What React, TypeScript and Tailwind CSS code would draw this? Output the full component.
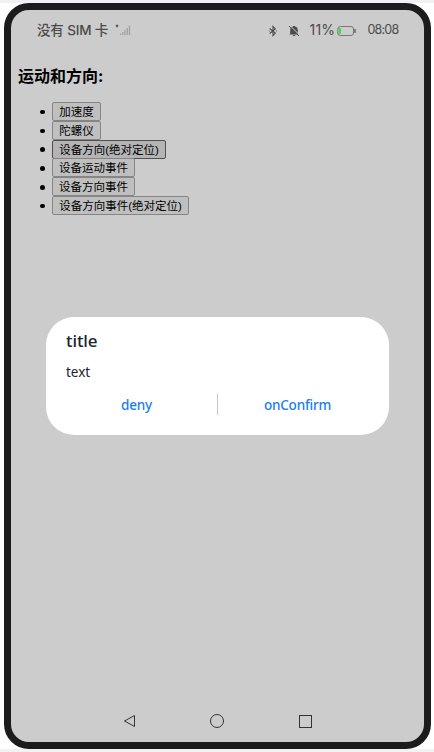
const items = [
  { label: '加速度', box: 'w-[49px]' },
  { label: '陀螺仪', box: 'w-[49px]' },
  { label: '设备方向(绝对定位)', box: 'w-[114px]', active: true },
  { label: '设备运动事件', box: 'w-[83px]' },
  { label: '设备方向事件', box: 'w-[83px]' },
  { label: '设备方向事件(绝对定位)', box: 'w-[137px]' },
];

function StatusBar() {
  return (
    <header className="flex h-10 items-center pl-[26px] pr-[26px] text-[#4b4b4b]">
      <span className="w-[73px] whitespace-nowrap text-[13.5px] font-medium leading-5 tracking-[-0.15px]">没有 SIM 卡</span>
      <svg className="ml-[5px] h-3 w-4" viewBox="0 0 16 12" fill="none">
        <path d="M1 1l2 2M3 1l-2 2" stroke="#555" strokeWidth="1.100" />
        <path d="M5.500 11V9.500M7.800 11V8M10 11V6M12.300 11V4M14.500 11V1.500" stroke="#a2a2a2" strokeWidth="1.300" />
      </svg>
      <div className="ml-auto flex items-center">
        <svg className="mt-px h-3 w-2.5" viewBox="0 0 10 12" fill="none" stroke="#4b4b4b" strokeWidth="1.100">
          <path d="M1.700 3.500L7.300 8 5 10.500v-9L7.300 4 1.700 8.500" />
          <path d="M.8 6h.8M8.200 6H9" />
        </svg>
        <svg className="ml-[10px] mt-px h-3 w-3" viewBox="0 0 12 12">
          <path d="M2.200 8.500V5c0-2 1.200-3.200 2.800-3.500V1h2v.5C8.600 1.800 9.800 3 9.800 5v3.500l1 1H1.200zM4.700 10h2.600c-.3 1.500-2.300 1.500-2.600 0z" fill="#4b4b4b" />
          <path d="M2 .5l9.500 9.500" stroke="#ccc" strokeWidth="1" />
          <path d="M1 1l10 10" stroke="#4b4b4b" strokeWidth="1" />
        </svg>
        <span className="ml-[10px] w-[27px] whitespace-nowrap text-[14px] leading-5 tracking-[0.2px]">11%</span>
        <svg className="mt-px h-3 w-5" viewBox="0 0 20 12">
          <rect x=".8" y="1.500" width="15.700" height="9" rx="2.500" fill="none" stroke="#777" />
          <rect x="1.700" y="3" width="2.300" height="6" rx=".7" fill="#3edb50" />
          <path d="M18 4v4" stroke="#666" strokeWidth="1.500" />
        </svg>
        <span className="ml-[11px] w-[30px] whitespace-nowrap text-[12.5px] leading-5 tracking-[-0.8px]">08:08</span>
      </div>
    </header>
  );
}

function Dialog() {
  return (
    <section className="absolute left-[34.500px] top-[307px] h-[118px] w-[343.500px] rounded-[28px] bg-white px-[20.500px] pt-[13px] font-['Noto_Sans','Noto_Sans_CJK_SC',sans-serif] text-[#192330]">
      <h2 className="text-[17px] font-medium leading-[22px] tracking-[-0.1px]">title</h2>
      <p className="mt-2.5 text-[13.5px] leading-5">text</p>
      <div className="mt-3 flex h-[21px] items-center text-[13.5px] font-medium leading-5 text-[#1a7df0]">
        <button className="h-[22px] w-[141px] text-center tracking-[-0.2px]">deny</button>
        <span className="ml-[10px] h-[21px] w-px bg-[#c6c6c6]" />
        <button className="ml-[9px] h-[22px] w-[141px] text-center tracking-[-0.2px]">onConfirm</button>
      </div>
    </section>
  );
}

export default function App() {
  return (
    <div className="h-[752px] w-[434px] overflow-hidden border-t-[3px] border-b-[3px] border-t-[#f0f1f5] border-b-[#f2f2f2] bg-white pl-1">
      <main className="relative flex h-[746px] w-[426.500px] flex-col overflow-hidden rounded-[25px] border-[7px] border-[#1c1c1c] bg-[#ccc] font-['Inter','Noto_Sans_CJK_SC',sans-serif]">
        <StatusBar />
        <h1 className="mt-[14px] ml-[7px] text-[16px] font-bold leading-6 text-black">运动和方向:</h1>
        <ul className="mt-[14px] ml-[29px] text-black">
          {items.map((item) => (
            <li key={item.label} className="flex h-[18.85px] items-center">
              <span className="mr-[7.500px] mt-px size-[4.500px] rounded-full bg-black" />
              <button
                className={`${item.box} ${item.active ? 'border-[#505050] bg-[#b4b4b4]' : 'border-[#858585] bg-[#bfbfbf]'} h-[19px] shrink-0 whitespace-nowrap rounded-[2px] border text-center font-['Liberation_Sans','Noto_Sans_CJK_SC',sans-serif] text-[11.500px] leading-[18px]`}
              >
                {item.label}
              </button>
            </li>
          ))}
        </ul>
        <nav className="mt-auto mb-[14px] flex items-center pl-[112px]">
          <svg className="h-[14px] w-[13px]" viewBox="0 0 13 14" fill="none" stroke="#333">
            <path d="M11.500 1.500v11L1.500 7z" />
          </svg>
          <span className="ml-[74px] size-[14px] rounded-full border border-[#333]" />
          <span className="ml-[75px] size-[13px] border border-[#333]" />
        </nav>
        <Dialog />
      </main>
    </div>
  );
}
